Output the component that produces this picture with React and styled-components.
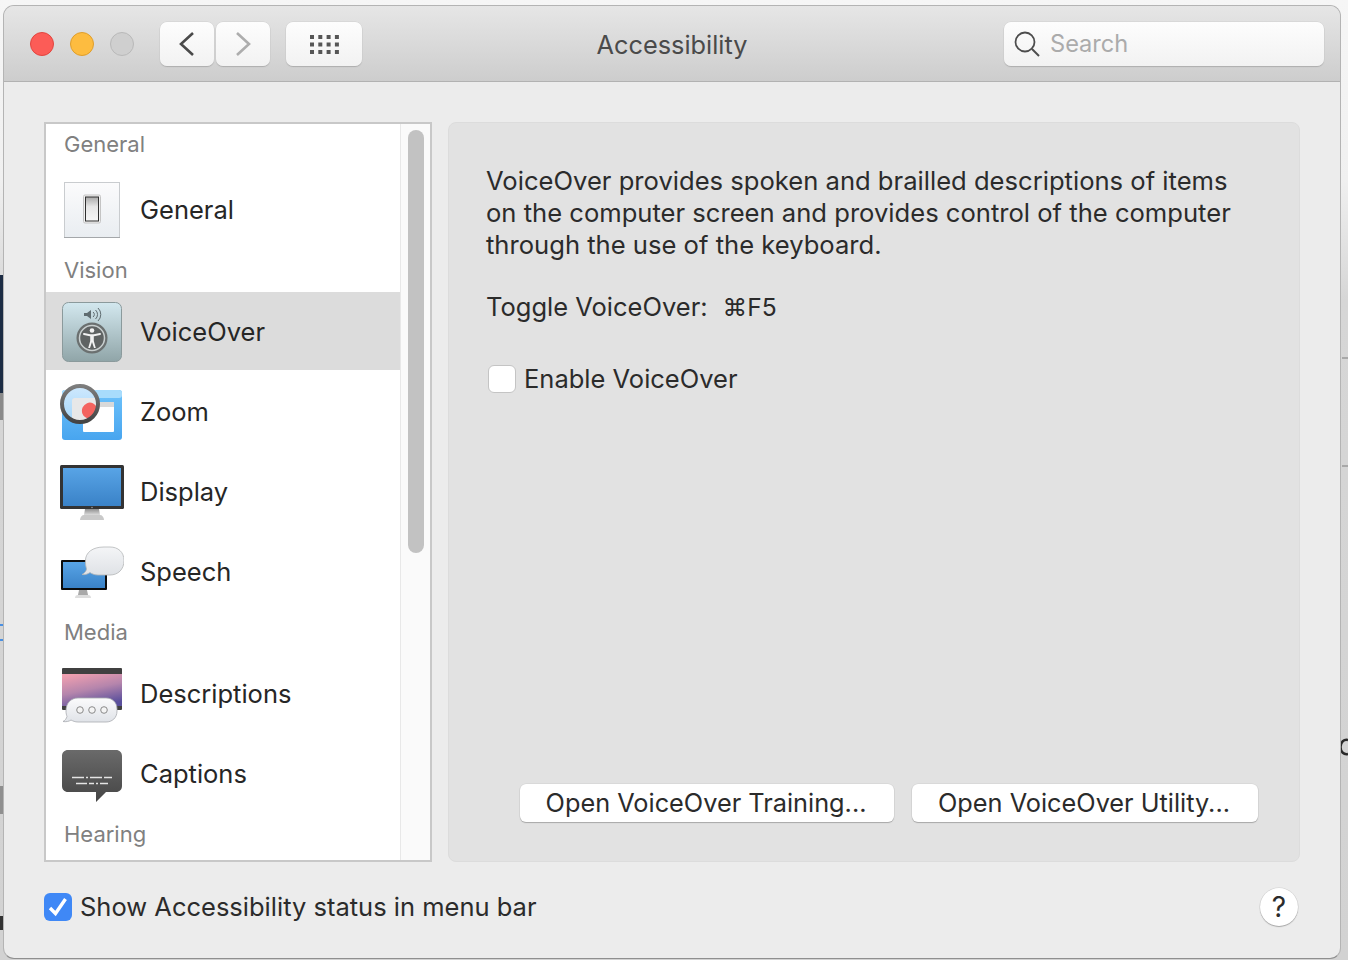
import styled, { createGlobalStyle } from 'styled-components';

const GlobalStyle = createGlobalStyle`
	html, body {
		margin: 0;
		padding: 0;
		background: #f6f6f6;
	}
	body {
		font-family: Inter, "Liberation Sans", "DejaVu Sans", sans-serif;
		color: #2b2b2b;
		font-size: 25.5px;
	}
	* {
		box-sizing: border-box;
	}
`;

// bits of the desktop that show around the window
const SCRAPS = [
	{ left: 0, top: 275, width: 3, height: 118, color: '#1c2c44' },
	{ left: 0, top: 393, width: 3, height: 27, color: '#8a8a8a' },
	{ left: 0, top: 624, width: 3, height: 2, color: '#4a90e2' },
	{ left: 0, top: 639, width: 3, height: 2, color: '#4a90e2' },
	{ left: 0, top: 786, width: 3, height: 28, color: '#8f8f8f' },
	{ left: 0, top: 916, width: 3, height: 14, color: '#333333' },
	{ left: 1342, top: 357, width: 6, height: 2, color: '#a8a8a8' },
	{ left: 1342, top: 465, width: 6, height: 2, color: '#a8a8a8' },
];

function SwitchIcon() {
	return (
		<svg width="64" height="64" viewBox="0 0 64 64">
			<defs>
				<linearGradient id="tile" x1="0" y1="0" x2="0" y2="1">
					<stop offset="0" stopColor="#fbfbfc" />
					<stop offset="1" stopColor="#e9edf1" />
				</linearGradient>
				<linearGradient id="rocker" x1="0" y1="0" x2="0" y2="1">
					<stop offset="0" stopColor="#a9a9a9" />
					<stop offset="0.4" stopColor="#e6e6e6" />
					<stop offset="1" stopColor="#f7f7f7" />
				</linearGradient>
			</defs>
			<rect x="4.5" y="4.5" width="55" height="55" fill="url(#tile)" stroke="#c9cccf" />
			<path d="M4 59.5h56" stroke="#a4a7aa" strokeWidth="1" />
			<rect x="23.5" y="17" width="17" height="28" rx="1.5" fill="#f1f1f1" stroke="#c4c4c4" />
			<rect x="25.5" y="19" width="13" height="24" fill="url(#rocker)" stroke="#2f2f2f" strokeWidth="1" />
		</svg>
	);
}

function VoiceOverIcon() {
	return (
		<svg width="64" height="64" viewBox="0 0 64 64">
			<defs>
				<linearGradient id="vo" x1="0" y1="0" x2="0" y2="1">
					<stop offset="0" stopColor="#d3e8ef" />
					<stop offset="1" stopColor="#90a5a8" />
				</linearGradient>
			</defs>
			<rect x="2.5" y="3.5" width="59" height="59" rx="6" fill="url(#vo)" stroke="#8b9a9c" />
			<path d="M24 14h3l4-3v9l-4-3h-3z" fill="#5f6c70" />
			<path d="M33 13a3 3 0 0 1 0 5M35.5 11a6 6 0 0 1 0 9M38 9a9 9 0 0 1 0 13" fill="none" stroke="#5f6c70" strokeWidth="1" />
			<circle cx="32" cy="39" r="15.5" fill="#6b7070" />
			<circle cx="32" cy="39" r="12.5" fill="#5f6363" stroke="#c9cfcf" strokeWidth="1.5" />
			<circle cx="32" cy="31.5" r="2.3" fill="#f2f2f2" />
			<path d="M24 35l6 1.2h4l6-1.2" fill="none" stroke="#f2f2f2" strokeWidth="2" strokeLinecap="round" />
			<path d="M30.2 36h3.6v6l2 7h-1.8l-2-6-2 6h-1.8l2-7z" fill="#f2f2f2" />
		</svg>
	);
}

function ZoomIcon() {
	return (
		<svg width="64" height="64" viewBox="0 0 64 64">
			<defs>
				<linearGradient id="zoomTile" x1="0" y1="0" x2="0" y2="1">
					<stop offset="0" stopColor="#6fc3fb" />
					<stop offset="1" stopColor="#48a5ef" />
				</linearGradient>
				<linearGradient id="lens" x1="0" y1="0" x2="0" y2="1">
					<stop offset="0" stopColor="#cfe9fd" />
					<stop offset="1" stopColor="#a5d6fa" />
				</linearGradient>
				<linearGradient id="ring" x1="0" y1="0" x2="0" y2="1">
					<stop offset="0" stopColor="#7d7d7d" />
					<stop offset="1" stopColor="#444444" />
				</linearGradient>
				<clipPath id="lensClip">
					<circle cx="20" cy="24" r="18" />
				</clipPath>
			</defs>
			<rect x="2" y="10" width="60" height="50" rx="3" fill="url(#zoomTile)" />
			<rect x="2" y="10" width="60" height="8" rx="3" fill="#a8dcfc" />
			<rect x="23" y="22" width="31" height="30" rx="1" fill="#ffffff" />
			<rect x="23" y="22" width="31" height="5" fill="#d9d9d9" />
			<circle cx="20" cy="24" r="18" fill="url(#lens)" />
			<g clipPath="url(#lensClip)">
				<rect x="12" y="18" width="32" height="30" rx="3" fill="#e8e8e8" />
				<ellipse cx="29.5" cy="30.5" rx="7.5" ry="8" transform="rotate(25 29.5 30.5)" fill="#f4645f" />
			</g>
			<circle cx="20" cy="24" r="18" fill="none" stroke="url(#ring)" strokeWidth="4" />
		</svg>
	);
}

function DisplayIcon() {
	return (
		<svg width="64" height="64" viewBox="0 0 64 64">
			<defs>
				<linearGradient id="screen" x1="0" y1="0" x2="0" y2="1">
					<stop offset="0" stopColor="#58a4e6" />
					<stop offset="1" stopColor="#3a82c7" />
				</linearGradient>
				<linearGradient id="stand" x1="0" y1="0" x2="0" y2="1">
					<stop offset="0" stopColor="#8f8f8f" />
					<stop offset="1" stopColor="#dcdcdc" />
				</linearGradient>
			</defs>
			<path d="M25 49h14l1 6H24z" fill="url(#stand)" />
			<path d="M20 60c0-3 2-5 4-5h16c2 0 4 2 4 5z" fill="#c9c9c9" />
			<rect x="0" y="5" width="64" height="44" rx="1.5" fill="#333333" />
			<rect x="3" y="8" width="58" height="38" fill="url(#screen)" />
			<circle cx="32" cy="47.5" r="0.8" fill="#999999" />
		</svg>
	);
}

function SpeechIcon() {
	return (
		<svg width="64" height="64" viewBox="0 0 64 64">
			<defs>
				<linearGradient id="speechScreen" x1="0" y1="0" x2="0" y2="1">
					<stop offset="0" stopColor="#58a4e6" />
					<stop offset="1" stopColor="#3a82c7" />
				</linearGradient>
				<linearGradient id="bubble" x1="0" y1="0" x2="0" y2="1">
					<stop offset="0" stopColor="#f4f5f7" />
					<stop offset="1" stopColor="#dfe2e6" />
				</linearGradient>
			</defs>
			<path d="M19 50h8l1 5H18z" fill="#a9a9a9" />
			<path d="M15 58c0-2 1-3 3-3h10c2 0 3 1 3 3z" fill="#dddddd" />
			<rect x="1" y="20" width="46" height="30" rx="1" fill="#0c0c0c" />
			<rect x="3" y="22" width="42" height="26" fill="url(#speechScreen)" />
			<path d="M44 7h6c8 0 14 5 14 13.5 0 9-6 14.5-14 14.5H38c-3 0-6-1-8-2.5-2 1.5-5 2.5-8 2 2.5-1.2 4-3 4.6-5.5-.8-2.4-1.2-5-1.2-8C25.4 12.5 32.4 7 44 7z" fill="url(#bubble)" stroke="#b4b6b8" strokeWidth="0.8" />
		</svg>
	);
}

function DescriptionsIcon() {
	return (
		<svg width="64" height="64" viewBox="0 0 64 64">
			<defs>
				<linearGradient id="dusk" x1="0.2" y1="0" x2="0.6" y2="1">
					<stop offset="0" stopColor="#ef9fb0" />
					<stop offset="0.5" stopColor="#b585ac" />
					<stop offset="1" stopColor="#5a4f9c" />
				</linearGradient>
				<linearGradient id="descBubble" x1="0" y1="0" x2="0" y2="1">
					<stop offset="0" stopColor="#fbfbfc" />
					<stop offset="1" stopColor="#e0e3e8" />
				</linearGradient>
			</defs>
			<rect x="2" y="6" width="60" height="42" rx="1" fill="#404040" />
			<rect x="2" y="12" width="60" height="32" fill="url(#dusk)" />
			<path d="M18 36h28c6 0 11 4 11 11v2c0 7-5 11-11 11H18c-3 0-5-1-7-2-2 1.5-5 2-8 1.5 2-1 3.500-3 4-5-.5-1.500-1-3-1-5.500 0-8 5-13 12-13z" fill="url(#descBubble)" stroke="#a8abb0" strokeWidth="0.8" />
			<circle cx="20" cy="48" r="3.3" fill="#f4f4f4" stroke="#8a8a8a" strokeWidth="1" />
			<circle cx="32" cy="48" r="3.3" fill="#f4f4f4" stroke="#8a8a8a" strokeWidth="1" />
			<circle cx="44" cy="48" r="3.3" fill="#f4f4f4" stroke="#8a8a8a" strokeWidth="1" />
		</svg>
	);
}

function CaptionsIcon() {
	return (
		<svg width="64" height="64" viewBox="0 0 64 64">
			<defs>
				<linearGradient id="cap" x1="0" y1="0" x2="0" y2="1">
					<stop offset="0" stopColor="#6a6a6a" />
					<stop offset="1" stopColor="#454545" />
				</linearGradient>
			</defs>
			<path d="M8 8h48c3.5 0 6 2.5 6 6v30c0 3.5-2.5 6-6 6H46L36 60V50H8c-3.5 0-6-2.5-6-6V14c0-3.5 2.5-6 6-6z" fill="url(#cap)" />
			<path d="M12 35.5h12M26 35.5h2M30 35.5h12M44 35.5h8" stroke="#e4e4e4" strokeWidth="1.6" />
			<path d="M16 41.5h11M29 41.5h5M36 41.5h2M40 41.5h8" stroke="#e4e4e4" strokeWidth="1.6" />
		</svg>
	);
}

function App() {
	return (
		<>
			<GlobalStyle />
			<Page>
				{SCRAPS.map((s) => (
					<Scrap key={`${s.left}-${s.top}`} $left={s.left} $top={s.top} $width={s.width} $height={s.height} $color={s.color} />
				))}
				<DesktopArc width="9" height="20" viewBox="0 0 9 20">
					<path d="M9 3C5 2 1.500 5 1.500 10S5 18 9 17" fill="none" stroke="#2a2a2a" strokeWidth="2.5" />
				</DesktopArc>
				<Window>
					<TitleBar>
						<TitleLeft>
							<Lights>
								<Light $bg="#fc5c57" $edge="#e2453f" />
								<Light $bg="#fdbc40" $edge="#df9e2c" />
								<Light $bg="#cfcfcf" $edge="#b9b9b9" />
							</Lights>
							<NavGroup>
								<ToolButton $width={54}>
									<svg width="20" height="26" viewBox="0 0 20 26">
										<path d="M16 2 L4 13 L16 24" fill="none" stroke="#4a4a4a" strokeWidth="2.6" />
									</svg>
								</ToolButton>
								<ToolButton $width={54}>
									<svg width="20" height="26" viewBox="0 0 20 26">
										<path d="M4 2 L16 13 L4 24" fill="none" stroke="#adadad" strokeWidth="2.6" />
									</svg>
								</ToolButton>
							</NavGroup>
							<ToolButton $width={76}>
								<svg width="30" height="20" viewBox="0 0 30 20">
									{[0, 1, 2].map((r) =>
										[0, 1, 2, 3].map((c) => (
											<rect key={`${r}-${c}`} x={1 + c * 8.3} y={1 + r * 7.5} width="4" height="4" fill="#565656" />
										))
									)}
								</svg>
							</ToolButton>
						</TitleLeft>
						<Title>Accessibility</Title>
						<TitleRight>
							<SearchBox>
								<svg width="28" height="28" viewBox="0 0 28 28">
									<circle cx="12" cy="12" r="9.5" fill="none" stroke="#4d4d4d" strokeWidth="1.8" />
									<path d="M19 19 L26 26" stroke="#4d4d4d" strokeWidth="2" />
								</svg>
								<SearchText>Search</SearchText>
							</SearchBox>
						</TitleRight>
					</TitleBar>
					<Content>
						<MainRow>
							<Sidebar>
								<List>
									<SectionLabel $first>General</SectionLabel>
									<Row>
										<SwitchIcon />
										<RowText>General</RowText>
									</Row>
									<SectionLabel>Vision</SectionLabel>
									<Row $selected>
										<VoiceOverIcon />
										<RowText $selected>VoiceOver</RowText>
									</Row>
									<Row>
										<ZoomIcon />
										<RowText>Zoom</RowText>
									</Row>
									<Row>
										<DisplayIcon />
										<RowText>Display</RowText>
									</Row>
									<Row>
										<SpeechIcon />
										<RowText>Speech</RowText>
									</Row>
									<SectionLabel>Media</SectionLabel>
									<Row>
										<DescriptionsIcon />
										<RowText>Descriptions</RowText>
									</Row>
									<Row>
										<CaptionsIcon />
										<RowText>Captions</RowText>
									</Row>
									<SectionLabel>Hearing</SectionLabel>
								</List>
								<ScrollTrack>
									<ScrollThumb />
								</ScrollTrack>
							</Sidebar>
							<Panel>
								<Description>
									VoiceOver provides spoken and brailled descriptions of items
									<br />
									on the computer screen and provides control of the computer
									<br />
									through the use of the keyboard.
								</Description>
								<ToggleLine>
									<span>Toggle VoiceOver:</span>
									<Shortcut>⌘F5</Shortcut>
								</ToggleLine>
								<CheckLine>
									<EmptyCheck />
									<span>Enable VoiceOver</span>
								</CheckLine>
								<PanelButtons>
									<PushButton $width={374}>Open VoiceOver Training...</PushButton>
									<PushButton $width={346}>Open VoiceOver Utility...</PushButton>
								</PanelButtons>
							</Panel>
						</MainRow>
						<BottomRow>
							<StatusLine>
								<BlueCheck>
									<svg width="22" height="20" viewBox="0 0 22 20">
										<path d="M3 11 L8.5 16.5 L18.5 2" fill="none" stroke="#ffffff" strokeWidth="3.4" />
									</svg>
								</BlueCheck>
								<StatusText>Show Accessibility status in menu bar</StatusText>
							</StatusLine>
							<HelpButton>?</HelpButton>
						</BottomRow>
					</Content>
				</Window>
			</Page>
		</>
	);
}

export default App;

const Page = styled.div`
	position: relative;
	width: 1348px;
	height: 960px;
	padding: 5px 7px 1px 3px;
	overflow: hidden;
	background: linear-gradient(#f6f6f6 0, #f0f0f0 180px, #d6d6d6 300px, #d2d2d2 100%);
`;

const Scrap = styled.div`
	position: absolute;
	left: ${({ $left }) => $left}px;
	top: ${({ $top }) => $top}px;
	width: ${({ $width }) => $width}px;
	height: ${({ $height }) => $height}px;
	background: ${({ $color }) => $color};
`;

const DesktopArc = styled.svg`
	position: absolute;
	left: 1339px;
	top: 737px;
`;

const Window = styled.div`
	position: relative;
	width: 1338px;
	height: 954px;
	background: #ececec;
	border-radius: 11px;
	border: 1px solid #b4b4b4;
	border-bottom-color: #8f8f8f;
	overflow: hidden;
	display: flex;
	flex-direction: column;
`;

const TitleBar = styled.div`
	height: 76px;
	flex: none;
	display: grid;
	grid-template-columns: 1fr auto 1fr;
	align-items: center;
	padding: 1px 16px 0;
	background: linear-gradient(#e6e6e6, #cdcdcd);
	border-bottom: 1px solid #b2b2b2;
`;

const TitleLeft = styled.div`
	display: flex;
	align-items: center;
	padding-left: 10px;
`;

const TitleRight = styled.div`
	display: flex;
	justify-content: flex-end;
`;

const Lights = styled.div`
	display: flex;
	gap: 16px;
	margin-right: 26px;
`;

const Light = styled.div`
	width: 24px;
	height: 24px;
	border-radius: 50%;
	background: ${({ $bg }) => $bg};
	border: 1px solid ${({ $edge }) => $edge};
`;

const NavGroup = styled.div`
	display: flex;
	gap: 2px;
	margin-right: 16px;
`;

const ToolButton = styled.div`
	width: ${({ $width }) => $width}px;
	height: 44px;
	display: flex;
	align-items: center;
	justify-content: center;
	border-radius: 7px;
	background: linear-gradient(#fdfdfd, #f2f2f2);
	box-shadow: 0 1px 1px #adadad, 0 0 0 0.5px #d0d0d0;
`;

const Title = styled.div`
	padding-top: 2px;
	color: #4a4a4a;
	font-size: 25.3px;
	line-height: 32px;
	text-align: center;
`;

const SearchBox = styled.div`
	width: 320px;
	height: 44px;
	display: flex;
	align-items: center;
	gap: 9px;
	padding-left: 9px;
	border-radius: 7px;
	background: linear-gradient(#fdfdfd, #f2f2f2);
	box-shadow: 0 1px 1px #adadad, 0 0 0 0.5px #d0d0d0;
`;

const SearchText = styled.span`
	padding-bottom: 2px;
	color: #ababab;
	font-size: 23.6px;
`;

const Content = styled.div`
	flex: 1;
	display: flex;
	flex-direction: column;
	padding: 40px 40px 0;
`;

const MainRow = styled.div`
	display: flex;
	gap: 16px;
	height: 740px;
`;

const Sidebar = styled.div`
	width: 388px;
	display: flex;
	background: #ffffff;
	border: 2px solid #c8c8c8;
`;

const List = styled.div`
	width: 354px;
	overflow: hidden;
`;

const SectionLabel = styled.div`
	height: ${({ $first }) => ($first ? 46 : 42)}px;
	padding: ${({ $first }) => ($first ? '0 0 6px 18px' : '0 0 2px 18px')};
	display: flex;
	align-items: center;
	color: #808080;
	font-size: 22px;
`;

const Row = styled.div`
	height: ${({ $selected }) => ($selected ? 78 : 80)}px;
	margin-bottom: ${({ $selected }) => ($selected ? 2 : 0)}px;
	display: flex;
	align-items: center;
	gap: 16px;
	padding-left: 14px;
	background: ${({ $selected }) => ($selected ? '#dcdcdc' : 'transparent')};
`;

const RowText = styled.span`
	padding-bottom: ${({ $selected }) => ($selected ? 0 : 2)}px;
	color: #262626;
`;

const ScrollTrack = styled.div`
	flex: 1;
	background: #fafafa;
	border-left: 1px solid #e8e8e8;
	padding: 6px 6px 0 7px;
`;

const ScrollThumb = styled.div`
	width: 16px;
	height: 423px;
	border-radius: 8px;
	background: #c2c2c2;
`;

const Panel = styled.div`
	width: 852px;
	display: flex;
	flex-direction: column;
	padding: 42px 41px 39px 37px;
	background: #e2e2e2;
	border: 1px solid #dcdcdc;
	border-radius: 8px;
	line-height: 32px;
`;

const Description = styled.div`
	margin-bottom: 30px;
	font-size: 25.6px;
`;

const ToggleLine = styled.div`
	display: flex;
	gap: 15px;
	margin-bottom: 40px;
`;

const Shortcut = styled.span`
	font-size: 24.6px;
`;

const CheckLine = styled.div`
	display: flex;
	align-items: center;
	gap: 8px;
	padding-left: 2px;
`;

const EmptyCheck = styled.div`
	width: 28px;
	height: 28px;
	border-radius: 6px;
	background: #ffffff;
	border: 1px solid #c4c4c4;
`;

const PanelButtons = styled.div`
	margin-top: auto;
	display: flex;
	justify-content: flex-end;
	gap: 18px;
`;

const PushButton = styled.div`
	width: ${({ $width }) => $width}px;
	height: 38px;
	display: flex;
	align-items: center;
	justify-content: center;
	padding-right: 2px;
	border-radius: 6px;
	background: #ffffff;
	box-shadow: 0 1px 1px #a8a8a8, 0 0 0 0.5px #cfcfcf;
	font-size: 25.3px;
`;

const BottomRow = styled.div`
	display: flex;
	align-items: center;
	justify-content: space-between;
	height: 38px;
	margin-top: 26px;
	padding-right: 2px;
`;

const StatusLine = styled.div`
	display: flex;
	align-items: center;
	gap: 8px;
`;

const StatusText = styled.span`
	padding-bottom: 2px;
`;

const BlueCheck = styled.div`
	width: 28px;
	height: 28px;
	display: flex;
	align-items: center;
	justify-content: center;
	border-radius: 6px;
	background: #3f88f6;
`;

const HelpButton = styled.div`
	width: 38px;
	height: 38px;
	display: flex;
	align-items: center;
	justify-content: center;
	border-radius: 50%;
	background: #ffffff;
	box-shadow: 0 1px 1px #a8a8a8, 0 0 0 0.5px #cfcfcf;
	font-size: 28px;
`;
